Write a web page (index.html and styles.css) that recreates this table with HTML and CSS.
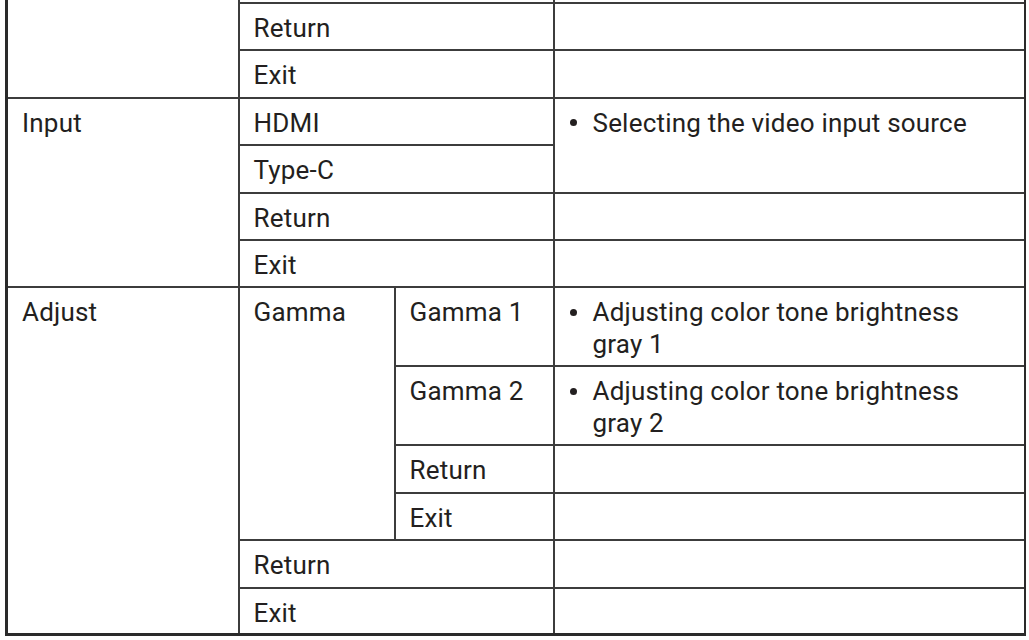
FILE: index.html
```html
<!DOCTYPE html>
<html lang="en">
<head>
<meta charset="utf-8">
<title>OSD Menu</title>
<link rel="stylesheet" href="styles.css">
</head>
<body>
<div class="page">
<table class="menu">
  <colgroup>
    <col class="c1">
    <col class="c2">
    <col class="c3">
    <col class="c4">
  </colgroup>
  <tbody>
    <tr class="sliver">
      <td rowspan="3" class="open-top"></td>
      <td colspan="2" class="open-top"></td>
      <td class="open-top"></td>
    </tr>
    <tr class="r1">
      <td colspan="2">Return</td>
      <td></td>
    </tr>
    <tr class="r1">
      <td colspan="2">Exit</td>
      <td></td>
    </tr>
    <tr class="r1">
      <td rowspan="4">Input</td>
      <td colspan="2">HDMI</td>
      <td rowspan="2" class="desc"><div class="bullet"><span class="dot"><i class="disc"></i></span><span>Selecting the video input source</span></div></td>
    </tr>
    <tr class="r1">
      <td colspan="2">Type-C</td>
    </tr>
    <tr class="r1">
      <td colspan="2">Return</td>
      <td></td>
    </tr>
    <tr class="r1">
      <td colspan="2">Exit</td>
      <td></td>
    </tr>
    <tr class="r2">
      <td rowspan="6">Adjust</td>
      <td rowspan="4">Gamma</td>
      <td>Gamma 1</td>
      <td class="desc"><div class="bullet"><span class="dot"><i class="disc"></i></span><span>Adjusting color tone brightness gray 1</span></div></td>
    </tr>
    <tr class="r2">
      <td>Gamma 2</td>
      <td class="desc"><div class="bullet"><span class="dot"><i class="disc"></i></span><span>Adjusting color tone brightness gray 2</span></div></td>
    </tr>
    <tr class="r1">
      <td>Return</td>
      <td></td>
    </tr>
    <tr class="r1">
      <td>Exit</td>
      <td></td>
    </tr>
    <tr class="r1">
      <td colspan="2">Return</td>
      <td></td>
    </tr>
    <tr class="r1 last">
      <td colspan="2">Exit</td>
      <td></td>
    </tr>
  </tbody>
</table>
</div>
</body>
</html>
```

FILE: styles.css
```css
html, body {
  margin: 0;
  padding: 0;
  background: #ffffff;
}

.page {
  padding-left: 5px;
  width: 1021px;
  height: 640px;
  overflow: hidden;
}

.menu {
  border-collapse: collapse;
  table-layout: fixed;
  width: 1019px;
  font-family: Roboto, "Noto Sans", sans-serif;
  font-size: 26px;
  letter-spacing: 0.2px;
  line-height: 32px;
  color: #231f20;
  border-left: 3px solid #2a2a2a;
  border-right: 3px solid #2a2a2a;
  border-bottom: 3px solid #2a2a2a;
}

.c1 { width: 232px; }
.c2 { width: 156px; }
.c3 { width: 159px; }
.c4 { width: 472px; }

.menu td {
  border: 2px solid #3c3c3c;
  padding: 8px 10px 0 14px;
  vertical-align: top;
}

.menu td.desc {
  padding-right: 40px;
}

.menu td.open-top {
  border-top: none;
}

.sliver { height: 3px; }
.sliver td { padding: 0; }

.r1 { height: 47.4px; }
.r2 { height: 79px; }

.bullet {
  display: flex;
  align-items: flex-start;
}

.dot {
  flex: 0 0 24px;
  height: 32px;
  display: flex;
  align-items: center;
  padding-left: 1px;
  box-sizing: border-box;
}

.disc {
  display: block;
  width: 7px;
  height: 7px;
  border-radius: 50%;
  background: #231f20;
}
```
